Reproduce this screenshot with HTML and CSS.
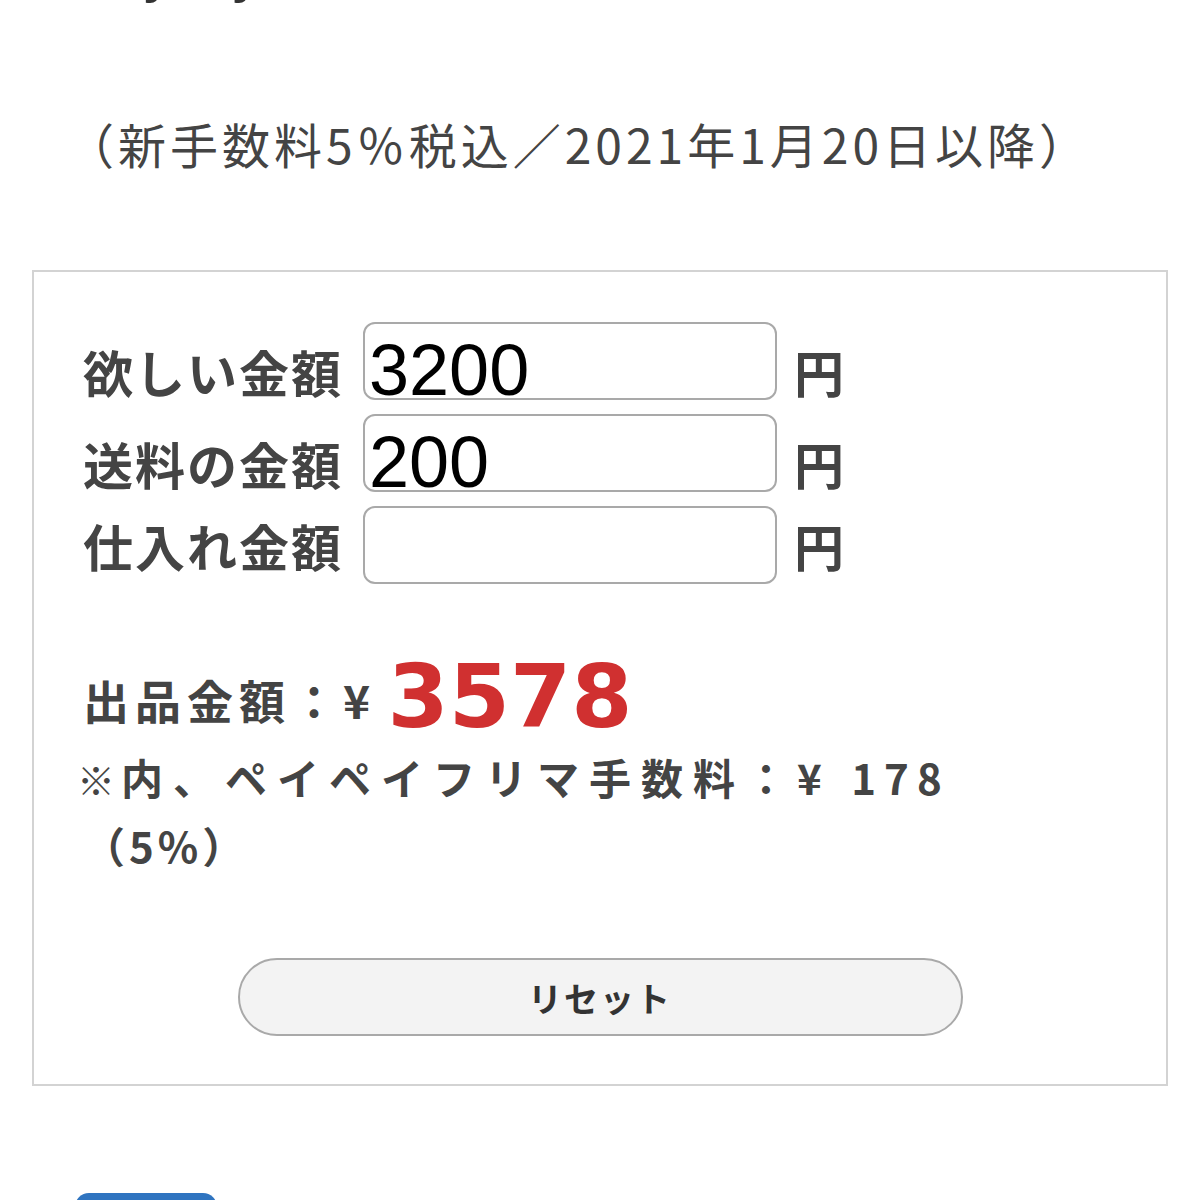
FILE: index.html
```html
<!DOCTYPE html>
<html lang="ja">
<head>
<meta charset="utf-8">
<title>PayPayフリマ 手数料計算</title>
<link rel="stylesheet" href="styles.css">
</head>
<body>
<h1 class="title">PayPayフリマ手数料計算</h1>
<p class="note">（新手数料5％税込／2021年1月20日以降）</p>
<section class="calc">
  <div class="fields">
    <div class="row">
      <label class="label" for="want">欲しい金額</label>
      <input class="field" id="want" type="text" value="3200">
      <span class="unit">円</span>
    </div>
    <div class="row">
      <label class="label" for="ship">送料の金額</label>
      <input class="field" id="ship" type="text" value="200">
      <span class="unit">円</span>
    </div>
    <div class="row row-empty">
      <label class="label" for="cost">仕入れ金額</label>
      <input class="field" id="cost" type="text" value="">
      <span class="unit">円</span>
    </div>
  </div>
  <div class="result">
    <p class="price">出品金額：¥ <span class="amount">3578</span></p>
    <p class="fee"><span class="mark">※</span>内、ペイペイフリマ手数料：¥ <span class="fee-num">178</span><br><span class="pct">（5%）</span></p>
  </div>
  <div class="actions">
    <button class="reset" type="button">リセット</button>
  </div>
</section>
<div class="next"><span class="next-btn"></span></div>
</body>
</html>
```
FILE: styles.css
```css
html, body {
  margin: 0;
  padding: 0;
  background: #fff;
}
body {
  font-family: "Noto Sans CJK JP", "Noto Sans", sans-serif;
  color: #444;
  overflow: hidden;
}
.title {
  margin: -54px 0 0 0;
  padding-left: 82px;
  font-family: "Liberation Sans", Arial, "Noto Sans CJK JP", sans-serif;
  font-size: 50px;
  line-height: 60px;
  font-weight: bold;
  color: #333;
  white-space: nowrap;
}
.note {
  margin: 102px 0 0 0;
  padding-left: 66px;
  font-size: 48px;
  letter-spacing: 4px;
  line-height: 70px;
  font-weight: normal;
  color: #444;
  white-space: nowrap;
}
.calc {
  margin: 92px 32px 0 32px;
  border: 2px solid #d3d3d3;
  padding: 50px 0 48px 49px;
}
.fields {
  display: flex;
  flex-direction: column;
  gap: 14px;
}
.row {
  display: flex;
  align-items: flex-end;
}
.label {
  width: 280px;
  margin-bottom: 4px;
  font-size: 50px;
  line-height: 50px;
  letter-spacing: 2px;
  font-weight: bold;
  color: #444;
  white-space: nowrap;
}
.field {
  box-sizing: border-box;
  width: 414px;
  height: 78px;
  margin: 0;
  padding: 18px 4px 0 4px;
  border: 2px solid #a9a9a9;
  border-radius: 12px;
  background: #fff;
  font-family: "Liberation Sans", Arial, sans-serif;
  font-size: 72px;
  line-height: 72px;
  color: #000;
  outline: none;
}
.unit {
  margin-left: 17px;
  margin-bottom: 4px;
  font-size: 50px;
  line-height: 50px;
  font-weight: bold;
  color: #444;
}
.row-empty .label,
.row-empty .unit {
  margin-bottom: 14px;
}
.result {
  margin-top: 69px;
}
.result p {
  margin: 0;
}
.price {
  font-size: 46px;
  line-height: 90px;
  letter-spacing: 6px;
  font-weight: bold;
  color: #444;
  white-space: nowrap;
}
.amount {
  margin-left: -5px;
  font-family: "DejaVu Sans", "Liberation Sans", sans-serif;
  font-size: 88px;
  line-height: 1;
  letter-spacing: 0;
  vertical-align: -8px;
  color: #d03030;
}
.fee {
  font-size: 42px;
  line-height: 66px;
  letter-spacing: 10px;
  font-weight: bold;
  color: #444;
  white-space: nowrap;
}
.mark {
  display: inline-block;
  margin-left: -6px;
  font-size: 38px;
  letter-spacing: 0;
  margin-right: 6px;
}
.fee-num {
  letter-spacing: 8px;
}
.pct {
  letter-spacing: 4px;
}
.actions {
  display: flex;
  justify-content: center;
  margin-top: 80px;
  margin-left: -49px;
}
.reset {
  box-sizing: border-box;
  width: 725px;
  height: 78px;
  border: 2px solid #a9a9a9;
  border-radius: 39px;
  background: #f3f3f3;
  font-family: "Noto Sans CJK JP", sans-serif;
  font-size: 34px;
  font-weight: bold;
  letter-spacing: 2px;
  color: #333;
  cursor: pointer;
}
.next {
  margin-top: 107px;
  padding-left: 75px;
}
.next-btn {
  display: block;
  width: 142px;
  height: 60px;
  border-radius: 14px;
  background: #2f74c0;
}
```
